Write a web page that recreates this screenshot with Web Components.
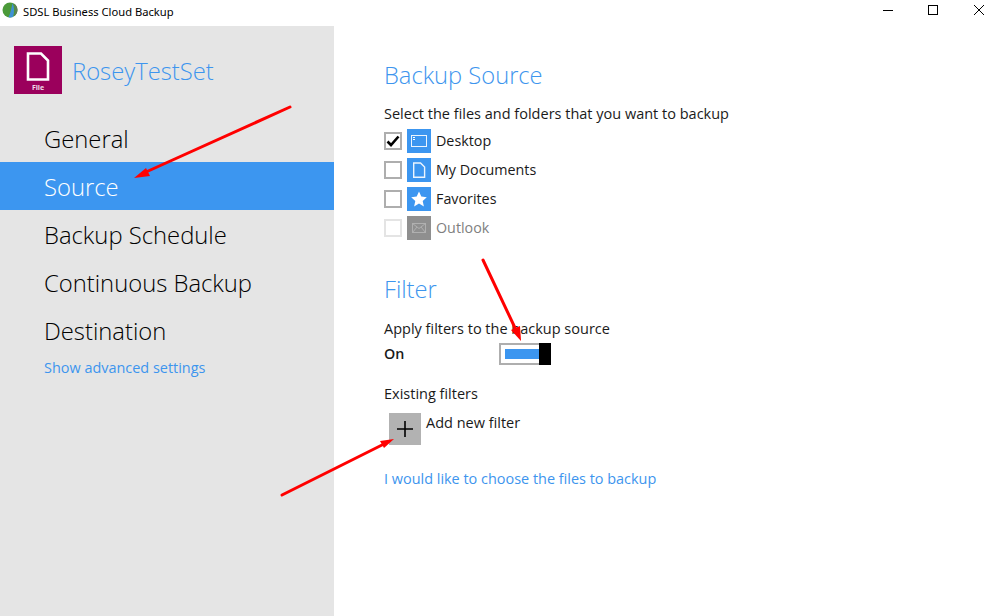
<!DOCTYPE html>
<html>
<head>
<meta charset="utf-8">
<title>SDSL Business Cloud Backup</title>
<style>
  html, body { margin: 0; padding: 0; height: 100%; }
  body { font-family: "Open Sans", sans-serif; color: #1a1a1a; background: #fff; overflow: hidden; }
</style>
</head>
<body>
<backup-app>
  <title-bar slot="top">SDSL Business Cloud Backup</title-bar>
  <side-nav slot="side" name="RoseyTestSet">
    <nav-item>General</nav-item>
    <nav-item active>Source</nav-item>
    <nav-item>Backup Schedule</nav-item>
    <nav-item>Continuous Backup</nav-item>
    <nav-item>Destination</nav-item>
  </side-nav>
  <source-page slot="main"></source-page>
</backup-app>

<script>
class BackupApp extends HTMLElement {
  constructor() {
    super();
    this.attachShadow({ mode: "open" });
    this.shadowRoot.innerHTML = `
      <style>
        :host { display: flex; flex-direction: column; position: relative; width: 998px; height: 616px; overflow: hidden; }
        .body { display: flex; flex: 1; min-height: 0; }
        .arrows { position: absolute; left: 0; top: 0; pointer-events: none; }
      </style>
      <slot name="top"></slot>
      <div class="body">
        <slot name="side"></slot>
        <slot name="main"></slot>
      </div>
      <svg class="arrows" width="998" height="616" viewBox="0 0 998 616">
        <g stroke="#f00" stroke-width="3" stroke-linecap="round" fill="#f00">
          <line x1="290" y1="107" x2="146" y2="172"/>
          <line x1="483" y1="260" x2="516" y2="330"/>
          <line x1="282" y1="495" x2="384" y2="444"/>
        </g>
        <g fill="#f00">
          <polygon points="134,178 146,168 150,176"/>
          <polygon points="521,341 511,330 520,326"/>
          <polygon points="394,439 380,441 384,448"/>
        </g>
      </svg>
    `;
  }
}

class TitleBar extends HTMLElement {
  constructor() {
    super();
    this.attachShadow({ mode: "open" });
    this.shadowRoot.innerHTML = `
      <style>
        :host { display: flex; align-items: center; height: 26px; flex: none; background: #fff; font-family: "Noto Sans", "Open Sans", sans-serif; font-size: 11.2px; color: #000; }
        .logo { margin: -6px 5px 0 2px; flex: none; }
        .text { flex: 1; position: relative; top: -2px; }
        .btns { display: flex; height: 100%; margin-right: -4px; }
        .btn { width: 46px; display: flex; align-items: flex-start; justify-content: center; padding-top: 4px; box-sizing: border-box; }
        .btn:first-child { width: 44px; }
      </style>
      <svg class="logo" width="16" height="16" viewBox="0 0 16 16">
        <circle cx="8" cy="8" r="7.5" fill="#4b9a3a"/>
        <path d="M10.5 1 C9.5 6 8.5 11 6.5 15.3 C8.5 15.8 10 15.4 11 15 C12.5 10.5 12.5 5 10.5 1Z" fill="#3f90d4"/>
        <path d="M11.5 1.2 C13.5 5 13.5 10.5 12 14.3 C17 10.5 16.5 3.8 11.5 1.2Z" fill="#5d7f55"/>
      </svg>
      <span class="text"><slot></slot></span>
      <div class="btns">
        <div class="btn"><svg width="12" height="12" viewBox="0 0 12 12"><path d="M1 6.5H11" stroke="#000" stroke-width="1"/></svg></div>
        <div class="btn"><svg width="12" height="12" viewBox="0 0 12 12"><rect x="1.5" y="1.5" width="9" height="9" fill="none" stroke="#000"/></svg></div>
        <div class="btn"><svg width="12" height="12" viewBox="0 0 12 12"><path d="M1 1L11 11M11 1L1 11" stroke="#000" stroke-width="1"/></svg></div>
      </div>
    `;
  }
}

class SideNav extends HTMLElement {
  constructor() {
    super();
    this.attachShadow({ mode: "open" });
    this.shadowRoot.innerHTML = `
      <style>
        :host { display: block; width: 334px; flex: none; background: #e5e5e5; box-sizing: border-box; padding-top: 20px; }
        .head { display: flex; align-items: center; gap: 10px; padding-left: 14px; height: 48px; margin-bottom: 20px; }
        .tile { width: 48px; height: 48px; background: #9b005c; color: #fff; display: flex; flex-direction: column; align-items: center; flex: none; box-sizing: border-box; padding-top: 6px; }
        .tile svg { display: block; }
        .tile span { font-size: 7px; font-weight: 700; line-height: 8px; margin-top: 3px; opacity: .85; }
        .name { font-size: 23.8px; font-weight: 300; color: #3d95ee; position: relative; top: 1px; }
        .more { display: block; padding-left: 44px; margin-top: 3px; font-size: 14.45px; line-height: 22px; color: #3d95ee; }
      </style>
      <div class="head">
        <div class="tile">
          <svg width="24" height="29" viewBox="0 0 24 29"><path d="M2 1.5H15L22 8.5V27.5H2Z" fill="none" stroke="#fff" stroke-width="2.6"/></svg>
          <span>File</span>
        </div>
        <div class="name"></div>
      </div>
      <slot></slot>
      <a class="more">Show advanced settings</a>
    `;
  }
  connectedCallback() {
    this.shadowRoot.querySelector(".name").textContent = this.getAttribute("name");
  }
}

class NavItem extends HTMLElement {
  constructor() {
    super();
    this.attachShadow({ mode: "open" });
    this.shadowRoot.innerHTML = `
      <style>
        :host { display: flex; align-items: center; box-sizing: border-box; height: 48px; padding: 2px 0 0 44px; font-size: 23.8px; font-weight: 300; color: #000; }
        :host([active]) { background: #3c96f0; color: #fff; }
      </style>
      <slot></slot>
    `;
  }
}

const sourceIcons = {
  desktop: `<rect x="4.5" y="6.5" width="15" height="11" fill="none" stroke="#fff" stroke-opacity=".9"/><path d="M6 8h2v1H6zM6 10h2v1H6z" fill="#fff"/>`,
  doc: `<path d="M6.7 5H13.5L17.6 9V19.2H6.7Z" fill="none" stroke="#fff" stroke-opacity=".9" stroke-width="1.4"/>`,
  star: `<path d="M12 4.5L14.3 9.6 19.8 10.2 15.7 13.9 16.9 19.4 12 16.6 7.1 19.4 8.3 13.9 4.2 10.2 9.7 9.6Z" fill="#fff"/>`,
  mail: `<rect x="5.5" y="7.5" width="13" height="9" fill="none" stroke="#b0b0b0"/><path d="M5.5 7.5L12 12.5 18.5 7.5M5.5 16.5L10 11M18.5 16.5L14 11" fill="none" stroke="#b0b0b0"/>`
};

class SourceRow extends HTMLElement {
  constructor() {
    super();
    this.attachShadow({ mode: "open" });
    this.shadowRoot.innerHTML = `
      <style>
        :host { display: flex; align-items: center; height: 29px; font-size: 14.3px; color: #1a1a1a; }
        .box { width: 18px; height: 18px; border: 2px solid #aeaeae; box-sizing: border-box; background: #fff; display: flex; align-items: center; justify-content: center; margin-right: 5px; flex: none; }
        .icon { width: 24px; height: 24px; background: #3c96f0; margin-right: 5px; flex: none; }
        .icon svg { display: block; }
        :host([disabled]) { color: #7f7f7f; }
        :host([disabled]) .box { border-color: #e4e4e4; }
        :host([disabled]) .icon { background: #8f8f8f; }
      </style>
      <div class="box"></div>
      <div class="icon"><svg width="24" height="24" viewBox="0 0 24 24"></svg></div>
      <slot></slot>
    `;
  }
  connectedCallback() {
    this.shadowRoot.querySelector(".icon svg").innerHTML = sourceIcons[this.getAttribute("icon")];
    if (this.hasAttribute("checked")) {
      this.shadowRoot.querySelector(".box").innerHTML =
        `<svg width="14" height="12" viewBox="0 0 14 12"><path d="M1.5 6.5L5 10 12.5 1.5" fill="none" stroke="#000" stroke-width="2.6"/></svg>`;
    }
  }
}

class ToggleSwitch extends HTMLElement {
  constructor() {
    super();
    this.attachShadow({ mode: "open" });
    this.shadowRoot.innerHTML = `
      <style>
        :host { display: block; width: 52px; height: 22px; position: relative; flex: none; margin-top: 2px; }
        .track { box-sizing: border-box; width: 100%; height: 100%; border: 2px solid #aeaeae; padding: 4px 10px 4px 4px; }
        .fill { background: #3c96f0; height: 100%; }
        .knob { position: absolute; right: 0; top: 0; width: 12px; height: 22px; background: #000; }
      </style>
      <div class="track"><div class="fill"></div></div>
      <div class="knob"></div>
    `;
  }
}

class SourcePage extends HTMLElement {
  constructor() {
    super();
    this.attachShadow({ mode: "open" });
    this.shadowRoot.innerHTML = `
      <style>
        :host { display: block; flex: 1; box-sizing: border-box; padding: 32px 0 0 50px; font-size: 14.5px; color: #1a1a1a; }
        h2 { margin: 0; font-size: 23.7px; line-height: 34px; font-weight: 300; color: #3d95ee; }
        p { margin: 0; line-height: 20px; }
        .intro { margin-top: 12px; margin-bottom: 2px; }
        .filter { margin-top: 30px; }
        .apply { margin-top: 13px; }
        .on { display: flex; align-items: center; height: 22px; margin-top: 3px; font-weight: 600; }
        .on b { font-weight: 600; font-size: 14.3px; width: 115px; }
        .existing { margin-top: 20px; }
        .add { display: flex; align-items: flex-start; gap: 5px; margin-top: 9px; margin-left: 5px; }
        .plus { width: 32px; height: 32px; background: #b2b2b2; display: flex; align-items: center; justify-content: center; }
        .add span { line-height: 20px; }
        a { display: block; margin-top: 24px; color: #3d95ee; line-height: 20px; font-size: 14.45px; }
      </style>
      <h2>Backup Source</h2>
      <p class="intro">Select the files and folders that you want to backup</p>
      <source-row icon="desktop" checked>Desktop</source-row>
      <source-row icon="doc">My Documents</source-row>
      <source-row icon="star">Favorites</source-row>
      <source-row icon="mail" disabled>Outlook</source-row>
      <h2 class="filter">Filter</h2>
      <p class="apply">Apply filters to the backup source</p>
      <div class="on"><b>On</b><toggle-switch></toggle-switch></div>
      <p class="existing">Existing filters</p>
      <div class="add">
        <div class="plus"><svg width="16" height="16" viewBox="0 0 16 16"><path d="M8 0V16M0 8H16" stroke="#000" stroke-width="1.6"/></svg></div>
        <span>Add new filter</span>
      </div>
      <a>I would like to choose the files to backup</a>
    `;
  }
}

customElements.define("backup-app", BackupApp);
customElements.define("title-bar", TitleBar);
customElements.define("side-nav", SideNav);
customElements.define("nav-item", NavItem);
customElements.define("source-row", SourceRow);
customElements.define("toggle-switch", ToggleSwitch);
customElements.define("source-page", SourcePage);
</script>
</body>
</html>
